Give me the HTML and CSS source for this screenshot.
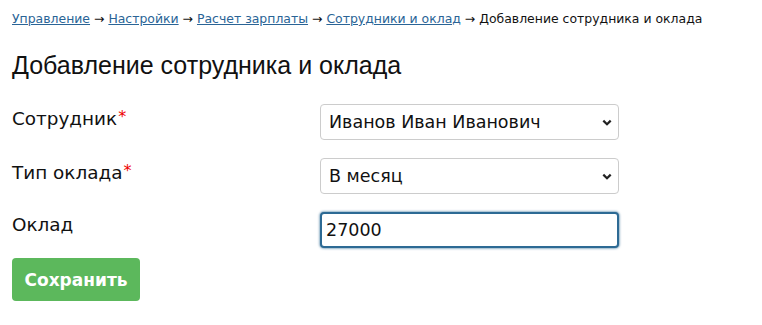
FILE: index.html
```html
<!DOCTYPE html>
<html lang="ru">
<head>
<meta charset="utf-8">
<title>Добавление сотрудника и оклада</title>
<link rel="stylesheet" href="styles.css">
</head>
<body>
<div class="page">
  <nav class="crumbs">
    <a href="#">Управление</a> → <a href="#">Настройки</a> → <a href="#">Расчет зарплаты</a> → <a href="#">Сотрудники и оклад</a> → <span>Добавление сотрудника и оклада</span>
  </nav>
  <h1 class="title">Добавление сотрудника и оклада</h1>
  <form class="form">
    <div class="row">
      <label class="label">Сотрудник<span class="req">*</span></label>
      <div class="field">
        <select class="control select"><option>Иванов Иван Иванович</option></select>
      </div>
    </div>
    <div class="row">
      <label class="label">Тип оклада<span class="req">*</span></label>
      <div class="field">
        <select class="control select"><option>В месяц</option></select>
      </div>
    </div>
    <div class="row">
      <label class="label">Оклад</label>
      <div class="field">
        <input class="control input focused" type="text" value="27000">
      </div>
    </div>
    <button type="button" class="btn">Сохранить</button>
  </form>
</div>
</body>
</html>
```
FILE: styles.css
```css
html, body { margin: 0; padding: 0; background: #fff; }
body { font-family: "DejaVu Sans", sans-serif; color: #111; }
.page { padding: 9px 12px 0 12px; }
.crumbs { font-size: 12.45px; line-height: 20px; color: #111; white-space: nowrap; }
.crumbs a { color: #2a6496; text-decoration: underline; }
.title { font-family: "Liberation Sans", Arial, sans-serif; font-weight: normal; font-size: 25px; margin: 21px 0 0 0; line-height: 30px; color: #111; }
.form { margin-top: 24px; }
.row { display: flex; align-items: flex-start; height: 36px; margin-bottom: 18px; }
.label { width: 308px; font-size: 18.4px; line-height: 24px; padding-top: 1px; color: #111; }
.req { color: #e00; font-size: 16px; vertical-align: 3px; margin-left: 1px; }
.field { width: 299px; }
.control { box-sizing: border-box; width: 299px; height: 36px; font-family: "DejaVu Sans", sans-serif; font-size: 17.5px; color: #111; background: #fff; border: 1px solid #ccc; border-radius: 4px; margin: 0; }
.select { appearance: none; -webkit-appearance: none; padding: 0 28px 0 8px;
  background-image: url("data:image/svg+xml;utf8,<svg xmlns='http://www.w3.org/2000/svg' width='10' height='7' viewBox='0 0 10 7'><path d='M1.3 1.6 L5 5.2 L8.7 1.6' fill='none' stroke='%23222' stroke-width='2.2'/></svg>");
  background-repeat: no-repeat; background-position: right 6px center; }
.input { padding: 0 4px; border: 2px solid #2d6a94; box-shadow: 0 0 2px 1px rgba(45,106,148,0.5); outline: none; }
.btn { margin-top: -8px; background: #5cb85c; color: #fff; border: none; border-radius: 4px; font-family: "DejaVu Sans", sans-serif; font-weight: bold; font-size: 17px; width: 128px; height: 43px; padding: 0; cursor: pointer; }
```
